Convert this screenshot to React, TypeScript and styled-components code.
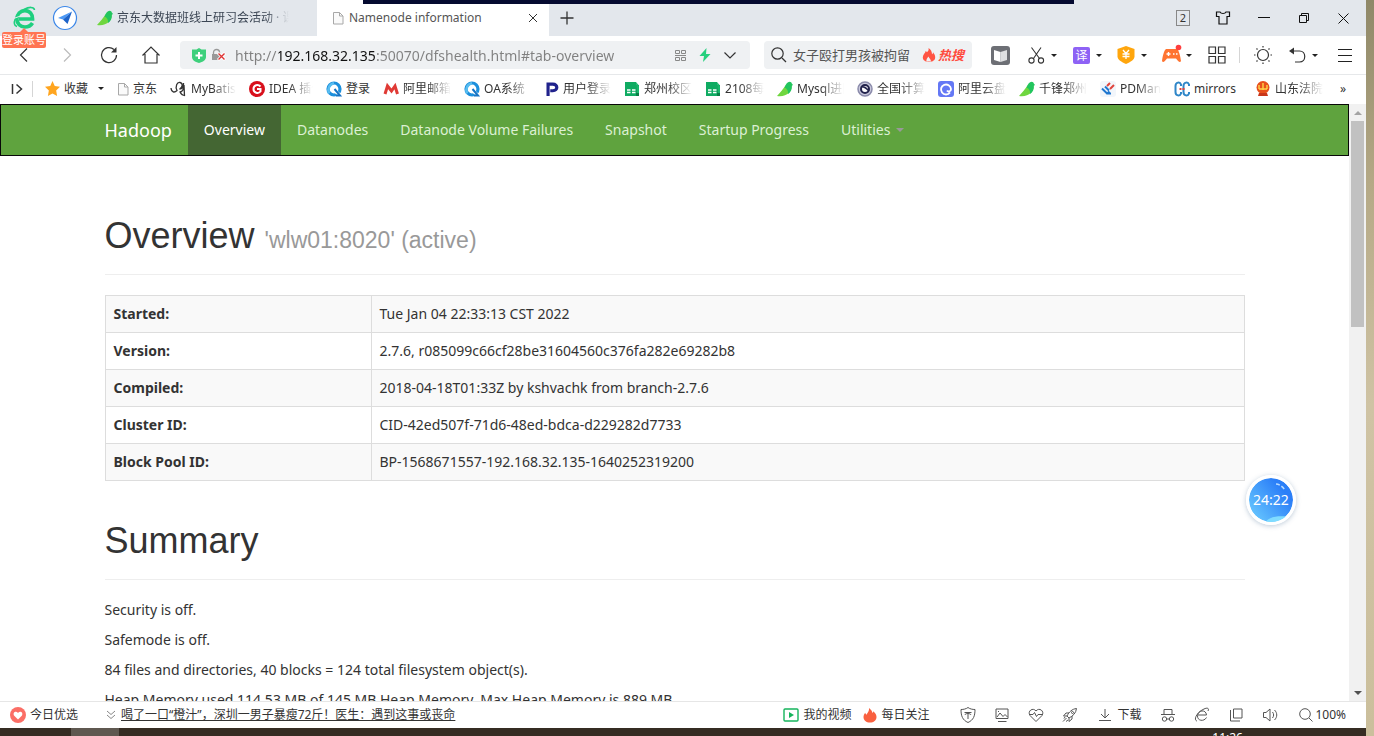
import React from "react";
import styled, { createGlobalStyle, css } from "styled-components";

const GlobalStyle = createGlobalStyle`
  * { box-sizing: border-box; }
  html, body, #root { height: 100%; }
  body {
    margin: 0;
    overflow: hidden;
    font-family: "Noto Sans", "Noto Sans CJK SC", sans-serif;
    font-size: 14px;
    line-height: 20px;
    color: #333;
  }
  button, input { font: inherit; color: inherit; border: 0; padding: 0; margin: 0; background: none; }
  a { color: inherit; text-decoration: none; }
  svg { display: block; flex: none; overflow: visible; }
`;

const Desktop = styled.div`
  height: 100vh;
  display: flex;
  flex-direction: column;
  padding-right: 8px;
  background: linear-gradient(#8f8868, #b5a986 25%, #cfc3a4 55%, #cbbf9c);
`;
const Recorder = styled.div`
  position: absolute;
  top: 0;
  left: 363px;
  width: 711px;
  height: 4px;
  background: #050a30;
`;
const Browser = styled.div`
  flex: 1;
  min-height: 0;
  display: flex;
  flex-direction: column;
  background: #fff;
`;

/* ---------- tab strip ---------- */
const TabStrip = styled.div`
  flex: none;
  height: 36px;
  display: flex;
  align-items: center;
  background: #e3e7ec;
  font-size: 12px;
`;
const IconButton = styled.button<{ $w: number; $gap?: number; $pr?: number }>`
  flex: none;
  width: ${(p) => p.$w}px;
  height: 28px;
  padding-right: ${(p) => p.$pr ?? 0}px;
  display: flex;
  align-items: center;
  justify-content: center;
  gap: ${(p) => p.$gap ?? 0}px;
`;
const Account = styled.div`
  position: relative;
  display: flex;
  padding-left: 4px;
`;
const LoginBadge = styled.span`
  position: absolute;
  z-index: 1;
  left: 2px;
  top: 28px;
  width: 44px;
  height: 16px;
  border-radius: 2px;
  background: #ff7452;
  color: #fff;
  font-size: 11px;
  line-height: 16px;
  text-align: center;
  white-space: nowrap;
  &::before {
    content: "";
    position: absolute;
    left: 18px;
    top: -4px;
    border: 4px solid transparent;
    border-top: 0;
    border-bottom-color: #ff7452;
  }
`;
const fade = css`
  mask-image: linear-gradient(to right, #000 calc(100% - 24px), transparent);
`;
const Tab = styled.button<{ $active?: boolean }>`
  width: 232px;
  height: 36px;
  padding: ${(p) => (p.$active ? "0 10px 0 15px" : "0 28px 0 12px")};
  display: flex;
  align-items: center;
  gap: ${(p) => (p.$active ? 5 : 4)}px;
  background: ${(p) => (p.$active ? "#fff" : "transparent")};
  color: ${(p) => (p.$active ? "#555" : "#3c4654")};
  text-align: left;
`;
const TabTitle = styled.span<{ $fade?: boolean }>`
  flex: 1;
  overflow: hidden;
  white-space: nowrap;
  ${(p) => p.$fade && fade}
`;
const Spacer = styled.div`
  flex: 1;
`;
const TabCount = styled.span`
  width: 14px;
  height: 16px;
  border: 1px solid #888;
  font-size: 11px;
  line-height: 14px;
  text-align: center;
`;

/* ---------- address row ---------- */
const AddressRow = styled.div`
  flex: none;
  height: 39px;
  display: flex;
  align-items: center;
  border-bottom: 1px solid #e6e8ea;
`;
const NavButtons = styled.div`
  display: flex;
  padding: 0 8px 0 3px;
`;
const Field = styled.label`
  flex: 1;
  min-width: 0;
  height: 28px;
  margin-right: 14px;
  padding: 0 14px 0 12px;
  display: flex;
  align-items: center;
  gap: 6px;
  border-radius: 4px;
  background: #eff1f3;
`;
const SearchField = styled(Field)`
  flex: none;
  width: 208px;
  padding: 0 8px 0 7px;
`;
const UrlInput = styled.input`
  flex: 1;
  min-width: 0;
  height: 24px;
  margin-left: 3px;
  outline: 0;
  color: transparent;
  background-image: linear-gradient(to right, #808080 44px, #111 44px, #111 141px, #808080 141px);
  background-clip: text;
  -webkit-background-clip: text;
`;
const SearchInput = styled.input`
  flex: 1;
  min-width: 0;
  outline: 0;
  font-size: 13px;
  color: #555;
`;
const HotSearch = styled.span`
  display: flex;
  align-items: center;
  gap: 2px;
  color: #ff4a3d;
  font-size: 13px;
  font-weight: 700;
  font-style: italic;
  white-space: nowrap;
`;
const Tools = styled.div`
  display: flex;
  align-items: center;
`;
const Translate = styled.span`
  width: 17px;
  height: 17px;
  border-radius: 2px;
  background: #8e62f5;
  color: #fff;
  font-size: 12px;
  line-height: 17px;
  text-align: center;
`;
const Divider = styled.i<{ $m?: number }>`
  width: 1px;
  height: 16px;
  margin: 0 ${(p) => p.$m ?? 4}px;
  background: #d5d5d5;
`;
const Caret = styled.i<{ $color?: string; $size?: number }>`
  flex: none;
  border: ${(p) => p.$size ?? 3}px solid transparent;
  border-top-color: ${(p) => p.$color ?? "#222"};
  border-bottom: 0;
`;

/* ---------- bookmarks ---------- */
const Bookmarks = styled.nav`
  flex: none;
  height: 29px;
  display: flex;
  align-items: center;
  padding: 0 20px 2px 10px;
  font-size: 12px;
  overflow: hidden;
`;
const Bookmark = styled.a<{ $w: number; $fade?: boolean }>`
  flex: none;
  display: flex;
  align-items: center;
  gap: 4px;
  margin-right: 13px;
  span {
    width: ${(p) => p.$w}px;
    overflow: hidden;
    white-space: nowrap;
    ${(p) => p.$fade && fade}
  }
`;
const Favorites = styled.button`
  flex: none;
  display: flex;
  align-items: center;
  gap: 4px;
  margin: 0 13px 0 4px;
  white-space: nowrap;
  ${Caret} { margin-left: 6px; }
`;

/* ---------- page ---------- */
const Viewport = styled.div`
  flex: 1;
  min-height: 0;
  display: flex;
`;
const Page = styled.div`
  flex: 1;
  min-width: 0;
  overflow: hidden;
`;
const Scrollbar = styled.div`
  flex: none;
  width: 17px;
  display: flex;
  flex-direction: column;
  align-items: center;
  padding: 7px 0 6px;
  background: #f1f1f1;
`;
const Thumb = styled.div`
  width: 13px;
  height: 206px;
  margin: 6px 0 auto;
  background: #c1c1c1;
`;
const Arrow = styled.i<{ $down?: boolean }>`
  border: 4px solid transparent;
  ${(p) => (p.$down ? "border-top-color: #505050; border-bottom: 0;" : "border-bottom-color: #a3a3a3; border-top: 0;")}
`;
const Navbar = styled.nav`
  border: 1px solid #080808;
  background: #5fa33e;
`;
const Container = styled.div`
  max-width: 1170px;
  margin: 0 auto;
  padding: 0 15px;
`;
const NavRow = styled(Container)`
  display: flex;
`;
const Brand = styled.a`
  padding: 15px 16px 15px 0;
  font-size: 18px;
  color: #fff;
`;
const NavLink = styled.a<{ $active?: boolean }>`
  display: flex;
  align-items: center;
  gap: 6px;
  padding: 15px 16px;
  white-space: nowrap;
  color: ${(p) => (p.$active ? "#fff" : "#dcf0d3")};
  background: ${(p) => (p.$active ? "#446633" : "transparent")};
`;
const PageHeader = styled.header<{ $first?: boolean }>`
  margin: ${(p) => (p.$first ? 60 : 40)}px 0 20px;
  padding-bottom: 18px;
  border-bottom: 1px solid #eee;
  h1 {
    margin: 0;
    font: 36px/40px "Liberation Sans", sans-serif;
  }
  small {
    font-size: 23px;
    line-height: 24px;
    color: #999;
  }
`;
const InfoTable = styled.table`
  width: 100%;
  border-collapse: collapse;
  th, td {
    padding: 8px;
    border: 1px solid #ddd;
    text-align: left;
  }
  th { width: 266px; }
  tr:nth-child(odd) { background: #f9f9f9; }
`;
const Para = styled.p`
  margin: 0 0 10px;
`;
const TimerBall = styled.div`
  position: absolute;
  right: 78px;
  top: 475px;
  width: 50px;
  height: 50px;
  display: grid;
  place-items: center;
  border-radius: 50%;
  border: 3px solid #fff;
  background: linear-gradient(50deg, #6fd0ff, #2b7ff8 75%);
  background-clip: padding-box;
  box-shadow: 0 1px 5px rgba(60, 100, 140, 0.35);
  color: #fff;
  svg { position: absolute; inset: 0; }
  span { position: relative; }
`;

/* ---------- status bar ---------- */
const StatusBar = styled.footer`
  flex: none;
  height: 27px;
  display: flex;
  align-items: center;
  padding: 0 20px 0 10px;
  border-top: 1px solid #e6e6e6;
  font-size: 12px;
`;
const StatusLink = styled.a<{ $ml?: number; $mr?: number; $gap?: number; $underline?: boolean }>`
  display: flex;
  align-items: center;
  gap: ${(p) => p.$gap ?? 4}px;
  margin: 0 ${(p) => p.$mr ?? 0}px 0 ${(p) => p.$ml ?? 0}px;
  white-space: nowrap;
  text-decoration: ${(p) => (p.$underline ? "underline" : "none")};
`;
const StatusIcons = styled.div`
  display: flex;
  align-items: center;
  margin-left: 22px;
`;
const Taskbar = styled.div`
  flex: none;
  height: 8px;
  display: flex;
  overflow: hidden;
  padding-left: 71px;
  background: #352c23;
  color: #fff;
  font-size: 12px;
`;
const TaskItem = styled.div`
  width: 48px;
  background: #5f5850;
`;
const TaskClock = styled.div`
  margin: 0 123px 0 auto;
`;

/* ---------- icons ---------- */
type IcoProps = { s?: number; w?: number; c?: string; sw?: number; vb?: string; children: React.ReactNode };
const Ico = ({ s = 16, w, c = "#333", sw = 1, vb = "0 0 16 16", children }: IcoProps) => (
  <svg width={w ?? s} height={s} viewBox={vb} fill="none" stroke={c} strokeWidth={sw} aria-hidden="true">
    {children}
  </svg>
);

const BrowserLogo = () => (
  <Ico s={24} vb="0 0 24 24" c="#1fcf7f">
    <path d="M20.500 17c-1.500 2.500-4 4-7.600 4-4.600 0-8-3.400-8-8s3.400-8.400 8-8.400c4.700 0 7.900 3.600 7.700 8.400H7" strokeWidth="3.600" />
    <path d="M5 20.500C-1 19 4 8 12 3.500 17 .8 22 .5 22.500 4" strokeWidth="1.600" />
    <path d="M1.500 12.500l7-2.500" stroke="#e3e7ec" strokeWidth="1" />
  </Ico>
);
const Compass = () => (
  <Ico s={26} vb="0 0 26 26">
    <circle cx="13" cy="13" r="11.500" fill="#fff" stroke="#3a86e8" strokeWidth="1.200" />
    <path d="M20 6.500L6 13l5 1.500z" fill="#4b98f5" stroke="none" />
    <path d="M20 6.500l-9 8L15.500 19z" fill="#1d63c9" stroke="none" />
  </Ico>
);
const Bird = () => (
  <Ico>
    <path d="M0 15C3 12 6 8 8.500 4.500L14.500 4C15.500 11 9 16.500 0 15z" fill="#6fd63f" stroke="none" />
    <path d="M7.500 6.500C9 3 10.500.8 12.500.8c1.500 0 2.200 1 2.300 1.700L16 4l-1.200.8c.4 3.500-1 6.500-3.800 8.200C11.500 10 10 7.500 7.500 6.500z" fill="#22c55e" stroke="none" />
  </Ico>
);
const Doc = () => (
  <Ico s={14} w={12} vb="0 0 12 14" c="#a8a8a8">
    <path d="M1.500 1.500h6l3.500 3.500v8H1.500zM7.500 1.500V5H11" fill="#fafafa" />
  </Ico>
);
const Q = () => (
  <Ico>
    <circle cx="8" cy="8" r="6" stroke="#1c8fdc" strokeWidth="3.200" />
    <path d="M3 12.500C1 8 3.500 3 8 2.200" stroke="#58bdf0" strokeWidth="2.600" />
    <path d="M7.500 8.500l7 6.500" stroke="#fff" strokeWidth="3.500" />
    <path d="M8.500 8l5.500 6.500h-4" stroke="#1674c4" strokeWidth="2" />
  </Ico>
);
const Sheet = () => (
  <Ico>
    <path d="M1 1h11v14H1z" fill="#0fab62" stroke="none" />
    <path d="M12 4h3v11h-3z" fill="#087d46" stroke="none" />
    <path d="M12 1l3 3.500V12h-2.500z" fill="#17b86c" stroke="none" />
    <path d="M3 9h3.500M8 9h3.500M3 11.500h3.500M8 11.500h3.500" stroke="#fff" strokeWidth="1.500" />
  </Ico>
);
const HotFlame = () => (
  <Ico s={14} vb="0 0 14 14">
    <path d="M6.500 0c.5 2-.2 3-1.500 4.300-.5-.7-.8-1-1.300-1.300C3.500 5 .8 6.500.8 9.300.8 12 3 14 7 14s6.200-2 6.200-4.700c0-2-1-3.500-2.200-5 0 1-.3 1.600-1 2C10 4 9 1.300 6.500 0z" fill="#ff5443" stroke="none" />
    <path d="M4.500 13.500c-.5-2 .5-3 2-5 .5 2 2.500 2.500 2.500 5z" fill="#eff1f3" stroke="none" />
  </Ico>
);
const DailyFlame = () => (
  <Ico s={16} w={14} vb="0 0 14 16">
    <path d="M6 1c2 1.500 3 3 3.500 5 .6-.5.8-1 .8-1.800C12.500 6 13.500 8 13.500 10c0 3.500-2.800 5.500-6.500 5.500S.5 13.500.5 10c0-2 1-3.300 1.800-4.300.3 1 .6 1.500 1.200 2C4.500 6 6.500 4 6 1z" fill="#f9603f" stroke="none" />
  </Ico>
);

type Mark = { label: string; w: number; fade?: boolean; icon: React.ReactNode };
const marks: Mark[] = [
  { label: "京东", w: 25, icon: <Doc /> },
  {
    label: "MyBatis", w: 45, fade: true,
    icon: <Ico c="#333" sw={1.3}><path d="M0 7c.5 4.500 3.500 5 6 2.500C4 5 6 1 9 1.500s3 5-.5 6.500C11 8 13 6 12.500 2M12.500 5c.5 3-1 6-4 6M13 4l.5 11M9 11c1 2 3 3.500 5 3.500" /></Ico>,
  },
  {
    label: "IDEA 插件", w: 44, fade: true,
    icon: <Ico><circle cx="8" cy="8" r="8" fill="#d8101c" stroke="none" /><path d="M11.500 5.500C9 3 4.500 4 4.500 8s5 5 7 2.500V8H8" stroke="#fff" strokeWidth="2" /></Ico>,
  },
  { label: "登录", w: 24, icon: <Q /> },
  {
    label: "阿里邮箱", w: 48, fade: true,
    icon: <Ico><path d="M2 13L4.500 5l4 5L12 5l2.500 8" stroke="#e03a35" strokeWidth="3" /></Ico>,
  },
  { label: "OA系统", w: 48, fade: true, icon: <Q /> },
  {
    label: "用户登录", w: 48, fade: true,
    icon: <Ico s={14}><path d="M3.500 16V2.500H9c6 0 6 7.500 0 7.500H6" stroke="#20228c" strokeWidth="3.600" /></Ico>,
  },
  { label: "郑州校区", w: 48, fade: true, icon: <Sheet /> },
  { label: "2108每日", w: 39, fade: true, icon: <Sheet /> },
  { label: "Mysql进阶", w: 47, fade: true, icon: <Bird /> },
  {
    label: "全国计算机", w: 48, fade: true,
    icon: <Ico><circle cx="8" cy="8" r="7" fill="#c9c9dc" stroke="#8b8bab" strokeWidth="1.500" /><circle cx="8" cy="8" r="4" fill="#fff" stroke="#23234d" strokeWidth="2" /><path d="M4 6c3-1 5 1 8 4" stroke="#23234d" strokeWidth="1.500" /></Ico>,
  },
  {
    label: "阿里云盘", w: 48, fade: true,
    icon: <Ico><rect width="16" height="16" rx="3" fill="#6478f5" stroke="none" /><path d="M12 11.500A5 5 0 1 1 13 8c0 3-3 3-4 1.500" stroke="#fff" strokeWidth="1.900" /></Ico>,
  },
  { label: "千锋郑州", w: 48, fade: true, icon: <Bird /> },
  {
    label: "PDMan", w: 41, fade: true,
    icon: <Ico><rect width="16" height="16" rx="3" fill="#f2f6fb" stroke="none" /><path d="M2 7.500l5 5 2.500-2M5 5.500l4 4M7 12.500l4 0" stroke="#1f77d0" strokeWidth="2" /><path d="M7 5l3-3M10 8l4-4" stroke="#e0443c" strokeWidth="2" /></Ico>,
  },
  {
    label: "mirrors", w: 48,
    icon: <Ico><path d="M7 5V3.500C6 .5 1.500 1 1.500 5v6c0 4 4.500 4.500 5.500 1.500V11M15 5V3.500C14 .5 9.500 1 9.500 5v6c0 4 4.500 4.500 5.500 1.500V11" stroke="#2f86c8" strokeWidth="2" /><path d="M5.500 8h6" stroke="#e0443c" strokeWidth="1.800" strokeDasharray="2 1" /></Ico>,
  },
  {
    label: "山东法院", w: 48, fade: true,
    icon: <Ico><circle cx="8" cy="6.500" r="6.500" fill="#e8501c" stroke="none" /><path d="M4 4v4M8 2v7M12 4v4M4 8h8" stroke="#ffd54a" strokeWidth="1.400" /><path d="M4 12h8l1 3H3z" fill="#c9371a" stroke="none" /></Ico>,
  },
];

const tableRows: [string, string][] = [
  ["Started:", "Tue Jan 04 22:33:13 CST 2022"],
  ["Version:", "2.7.6, r085099c66cf28be31604560c376fa282e69282b8"],
  ["Compiled:", "2018-04-18T01:33Z by kshvachk from branch-2.7.6"],
  ["Cluster ID:", "CID-42ed507f-71d6-48ed-bdca-d229282d7733"],
  ["Block Pool ID:", "BP-1568671557-192.168.32.135-1640252319200"],
];

const navItems = ["Overview", "Datanodes", "Datanode Volume Failures", "Snapshot", "Startup Progress"];

const statusIcons: [string, React.ReactNode][] = [
  ["防护", <><path d="M8 .5c2 1.500 4.500 2 7 2C15 9 13.500 13 8 15.500 2.500 13 1 9 1 2.500c2.500 0 5-.5 7-2z" /><path d="M4.500 5.500h7M8 5.500V12M5 8c0-2 5.500-2 6 0" /></>],
  ["截图", <><path d="M2 2h12v9.500H2zM4 14.500h8.500M3 10l3-4 3 3.500 2-2 2.500 2.500" /><path d="M4 4.500h1" /></>],
  ["健康", <><path d="M8 14.500L2 8.500C-1 4 5 0 8 4c3-4 9 0 6 4.500z" /><path d="M1 7.500h4l1.500-2 2 4 1.500-2h5" /></>],
  ["加速", <><path d="M5 9c2-4 5-7 9.500-7.500C14 6 11 9 7 11zM7 6H4L1.500 9H5M10 9v3l-3 2.500V11M4.500 11L1 14.500M3 10l-1 1.500M6 13l-2 1.500" /><circle cx="10.500" cy="5.500" r="1" /></>],
];
const statusIcons2: [string, React.ReactNode][] = [
  ["无痕", <><path d="M4 7V2.500h8V7M1 7.500h14M6.500 12h3" /><circle cx="4.500" cy="12" r="2.200" /><circle cx="11.500" cy="12" r="2.200" /></>],
  ["内核", <path d="M12.500 10.500C10 15 3 14 3.500 8.500 4 3 12 2 12.500 8H4M3 14C-1 13 3 5 10 2c3-1.500 5.500-1 4 2" />],
  ["窗口", <path d="M5.500 2H14v9H5.500zM2.500 3v11H12" />],
  ["声音", <path d="M1.500 5.500H4L8 2v12l-4-3.500H1.500zM10.500 5c1.500 2 1.500 4 0 6M12.500 3c3 3 3 7 0 10" />],
];

export default function App() {
  return (
    <Desktop>
      <GlobalStyle />
      <Browser>
        <TabStrip>
          <Account>
            <IconButton $w={40} aria-label="账号"><BrowserLogo /></IconButton>
            <LoginBadge>登录账号</LoginBadge>
          </Account>
          <IconButton $w={41} aria-label="导航"><Compass /></IconButton>
          <Tab>
            <Bird />
            <TabTitle $fade>京东大数据班线上研习会活动 · 课</TabTitle>
          </Tab>
          <Tab $active>
            <Doc />
            <TabTitle>Namenode information</TabTitle>
            <Ico s={10} w={12} vb="0 0 10 10"><path d="M1 1l8 8M9 1L1 9" /></Ico>
          </Tab>
          <IconButton $w={36} aria-label="新标签页"><Ico s={14} vb="0 0 14 14"><path d="M7 .5v13M.5 7h13" strokeWidth="1.300" /></Ico></IconButton>
          <Spacer />
          <IconButton $w={40} aria-label="标签数"><TabCount>2</TabCount></IconButton>
          <IconButton $w={40} aria-label="皮肤"><Ico s={14} vb="0 0 14 14" c="#111" sw={1.2}><path d="M4 1L.5 1v4.500H3V13h8V5.500h2.500V1L10 1c-1 2-5 2-6 0z" /></Ico></IconButton>
          <IconButton $w={41} aria-label="最小化"><Ico s={12} vb="0 0 12 12" c="#111"><path d="M0 5.500h12" /></Ico></IconButton>
          <IconButton $w={40} aria-label="还原"><Ico s={10} vb="0 0 10 10" c="#111"><path d="M.5 2.500h7v7h-7zM2.500 2.500v-2h7v7h-2" /></Ico></IconButton>
          <IconButton $w={42} $pr={3} aria-label="关闭"><Ico s={11} vb="0 0 11 11" c="#111"><path d="M.5.5l10 10M10.500.5l-10 10" /></Ico></IconButton>
        </TabStrip>

        <AddressRow>
          <NavButtons>
            <IconButton $w={42} aria-label="后退"><Ico s={14} vb="0 0 14 14" sw={1.2}><path d="M10 .5L3.500 7l6.500 6.500" /></Ico></IconButton>
            <IconButton $w={43} aria-label="前进"><Ico s={14} vb="0 0 14 14" c="#bbb" sw={1.2}><path d="M4 .5L10.500 7 4 13.500" /></Ico></IconButton>
            <IconButton $w={42} aria-label="刷新"><Ico s={18} vb="0 0 18 18" sw={1.2}><path d="M16.500 9A7.500 7.500 0 1 1 14 3.500" /><path d="M16.500 1v5.500H11z" fill="#333" stroke="none" /></Ico></IconButton>
            <IconButton $w={42} aria-label="主页"><Ico s={18} vb="0 0 18 18" sw={1.2}><path d="M.5 9.500L9 1l8.500 8.500M3 8v9h12V8" /></Ico></IconButton>
          </NavButtons>
          <Field>
            <Ico s={15} w={14} vb="0 0 14 15"><path d="M0 1.500h4.500L7 0l2.500 1.500H14V9c0 3-3 5-7 6-4-1-7-3-7-6z" fill="#3ed07c" stroke="none" /><path d="M7 4v7M3.500 7.500h7" stroke="#fff" strokeWidth="2" /></Ico>
            <Ico s={14} vb="0 0 14 14"><path d="M1.500 6V4.500c0-4 6-4 6 0V6" stroke="#999" strokeWidth="1.300" /><path d="M0 6h8v6H0z" fill="#999" stroke="none" /><path d="M6 5l7 7M13 5l-7 7" stroke="#fff" strokeWidth="3" /><path d="M6.500 5.500l6 6M12.500 5.500l-6 6" stroke="#d33" strokeWidth="1.400" /></Ico>
            <UrlInput aria-label="地址" defaultValue="http://192.168.32.135:50070/dfshealth.html#tab-overview" />
            <Ico s={11} vb="0 0 11 11" c="#888"><path d="M.5.5h4v3h-4zM6.500.5h4v3h-4zM.5 7.500h4v3h-4zM6.500 7.500h4v3h-4zM0 5.500h11" /></Ico>
            <Ico s={14} w={26} vb="0 0 14 14"><path d="M8.500 0L1.500 8H6l-1 6 7.500-8H8z" fill="#25d07d" stroke="none" /></Ico>
            <Ico s={7} w={12} vb="0 0 12 7" sw={1.2}><path d="M.5.5L6 6l5.500-5.500" /></Ico>
          </Field>
          <SearchField>
            <Ico s={16} sw={1.2}><circle cx="6.500" cy="6.500" r="5.700" /><path d="M11 11l4 4" /></Ico>
            <SearchInput aria-label="搜索" defaultValue="女子殴打男孩被拘留" />
            <HotSearch><HotFlame />热搜</HotSearch>
          </SearchField>
          <Tools>
            <IconButton $w={34} $pr={6} aria-label="阅读"><Ico s={19} vb="0 0 19 19"><rect width="19" height="19" rx="3" fill="#6d6f75" stroke="none" /><path d="M3 4l6.500 2V16L3 14z" fill="#fff" stroke="none" /><path d="M16 4L9.500 6v10l6.500-2z" fill="#dedfe1" stroke="none" /></Ico></IconButton>
            <IconButton $w={45} $gap={6} aria-label="截图"><Ico s={17} vb="0 0 17 17" sw={1.1}><path d="M3.500.5l8 11M13 .5L5.500 11.500" /><circle cx="3.500" cy="13.500" r="2.600" /><circle cx="13" cy="13.500" r="2.600" /></Ico><Caret /></IconButton>
            <IconButton $w={45} $gap={6} aria-label="翻译"><Translate>译</Translate><Caret /></IconButton>
            <IconButton $w={44} $gap={6} aria-label="优惠"><Ico s={18} vb="0 0 18 18"><path d="M9 0l8.500 3v7.500c0 3-4 5.500-8.500 7.500-4.500-2-8.500-4.500-8.500-7.500V3z" fill="#ffa60d" stroke="none" /><path d="M6 4l3 3.500L12 4M5.500 8h7M5.500 10.500h7M9 7.500V13" stroke="#fff" strokeWidth="1.300" /></Ico><Caret /></IconButton>
            <IconButton $w={45} $gap={5} aria-label="游戏"><Ico s={18} w={19} vb="0 0 19 18"><path d="M4 3h11c2 1 3.500 8 4 12-1 2.500-3 0-5-2.500H5C3 15 1 17.500 0 15 .5 11 2 4 4 3z" fill="#ff7431" stroke="none" /><path d="M4.500 8h4M6.500 6v4M11 8h1.500M14 8h1.500" stroke="#fff" strokeWidth="1.400" /><circle cx="16.500" cy="1.500" r="2.800" fill="#ff3f3f" stroke="none" /></Ico><Caret /></IconButton>
            <IconButton $w={36} aria-label="应用"><Ico s={18} vb="0 0 18 18" sw={1.2}><path d="M1 1h6.500v6.500H1zM10.500 1H17v6.500h-6.500zM1 10.500h6.500V17H1zM10.500 10.500H17V17h-6.500z" /></Ico></IconButton>
            <Divider />
            <IconButton $w={38} aria-label="夜间"><Ico s={18} vb="0 0 18 18" sw={1.2}><circle cx="9" cy="9" r="5.500" /><path d="M9 0v1.500M9 16.500V18M0 9h1.500M16.500 9H18M2.500 2.500l1 1M14.500 14.500l1 1M15.500 2.500l-1 1M3.500 14.500l-1 1" /></Ico></IconButton>
            <IconButton $w={42} $gap={6} aria-label="恢复"><Ico s={16} w={17} vb="0 0 17 16" sw={1.2}><path d="M2 4h8.500c7 0 7 11 0 11H6" /><path d="M0 4l5-3.500v7z" fill="#333" stroke="none" /></Ico><Caret /></IconButton>
            <IconButton $w={42} aria-label="菜单"><Ico s={14} vb="0 0 14 14" c="#222"><path d="M0 1.500h14M0 7.500h14M0 13.500h14" /></Ico></IconButton>
          </Tools>
        </AddressRow>

        <Bookmarks>
          <IconButton $w={14} aria-label="展开收藏"><Ico s={12} vb="0 0 12 12" sw={1.5}><path d="M1.500 1v10M5.500 1.500L10.500 6l-5 4.500" /></Ico></IconButton>
          <Divider $m={8} />
          <Favorites>
            <Ico s={15}><path d="M8 0l2.400 5.300 5.600.7-4.100 4 1 6L8 13.200 3.100 16l1-6L0 6l5.600-.7z" fill="#ffa51f" stroke="none" /></Ico>
            收藏
            <Caret />
          </Favorites>
          {marks.map((m) => (
            <Bookmark key={m.label} href={"#" + m.label} $w={m.w} $fade={m.fade}>
              {m.icon}
              <span>{m.label}</span>
            </Bookmark>
          ))}
          <Spacer />
          <button aria-label="更多收藏">»</button>
        </Bookmarks>

        <Viewport>
          <Page>
            <Navbar>
              <NavRow>
                <Brand href="#hadoop">Hadoop</Brand>
                {navItems.map((n, i) => (
                  <NavLink key={n} href={"#tab-" + i} $active={i === 0}>{n}</NavLink>
                ))}
                <NavLink href="#utilities">Utilities <Caret $size={4} $color="#999" /></NavLink>
              </NavRow>
            </Navbar>
            <Container as="main">
              <PageHeader $first>
                <h1>Overview <small>'wlw01:8020' (active)</small></h1>
              </PageHeader>
              <InfoTable>
                <tbody>
                  {tableRows.map(([k, v]) => (
                    <tr key={k}><th scope="row">{k}</th><td>{v}</td></tr>
                  ))}
                </tbody>
              </InfoTable>
              <PageHeader>
                <h1>Summary</h1>
              </PageHeader>
              <Para>Security is off.</Para>
              <Para>Safemode is off.</Para>
              <Para>84 files and directories, 40 blocks = 124 total filesystem object(s).</Para>
              <Para>Heap Memory used 114.53 MB of 145 MB Heap Memory. Max Heap Memory is 889 MB.</Para>
            </Container>
          </Page>
          <Scrollbar>
            <Arrow />
            <Thumb />
            <Arrow $down />
          </Scrollbar>
        </Viewport>

        <StatusBar>
          <StatusLink href="#picks">
            <Ico><circle cx="8" cy="8" r="8" fill="#fb6e66" stroke="none" /><path d="M8 12.500L4 8.500C2.500 5.500 6 3.500 8 6c2-2.500 5.500-.5 4 2.500z" fill="#fff" stroke="none" /></Ico>
            今日优选
          </StatusLink>
          <StatusLink href="#news" $ml={29} $gap={6} $underline>
            <Ico s={8} vb="0 0 8 8" c="#888"><path d="M0 0l4 3.500L8 0M0 4l4 3.500L8 4" /></Ico>
            喝了一口“橙汁”，深圳一男子暴瘦72斤！医生：遇到这事或丧命
          </StatusLink>
          <Spacer />
          <StatusLink href="#video">
            <Ico s={14} w={16} vb="0 0 16 14" c="#16b45c" sw={1.4}><rect x="1" y="1" width="14" height="12" rx="1" /><path d="M6 4l5 3-5 3z" fill="#16b45c" stroke="none" /></Ico>
            我的视频
          </StatusLink>
          <StatusLink href="#daily" $ml={12}>
            <DailyFlame />
            每日关注
          </StatusLink>
          <StatusIcons>
            {statusIcons.map(([n, g]) => (
              <IconButton key={n} $w={34} aria-label={n}><Ico s={16} c="#555">{g}</Ico></IconButton>
            ))}
            <StatusLink href="#download" $ml={12} $mr={10} $gap={6}>
              <Ico s={12} vb="0 0 12 12" c="#555"><path d="M6 0v9M2 5l4 4 4-4M0 11.500h12" /></Ico>
              下载
            </StatusLink>
            {statusIcons2.map(([n, g]) => (
              <IconButton key={n} $w={34} aria-label={n}><Ico s={16} c="#555">{g}</Ico></IconButton>
            ))}
            <StatusLink href="#zoom" $ml={12} $gap={2}>
              <Ico s={14} vb="0 0 14 14" c="#555"><circle cx="6" cy="6" r="5.300" /><path d="M10 10l3.500 3.500" /></Ico>
              100%
            </StatusLink>
          </StatusIcons>
        </StatusBar>
      </Browser>
      <Taskbar>
        <TaskItem />
        <TaskClock>11:26</TaskClock>
      </Taskbar>
      <Recorder />
      <TimerBall>
        <Ico s={44} vb="0 0 44 44">
          <path d="M17 43.500C22 38 30 38 37 38.500 32 43 24 45 17 43.500z" fill="#7fdcff" stroke="none" />
          <path d="M27 6c3 0 6 2 9 6" stroke="#b8dcff" strokeWidth="1.500" strokeDasharray="4 2" />
        </Ico>
        <span>24:22</span>
      </TimerBall>
    </Desktop>
  );
}
